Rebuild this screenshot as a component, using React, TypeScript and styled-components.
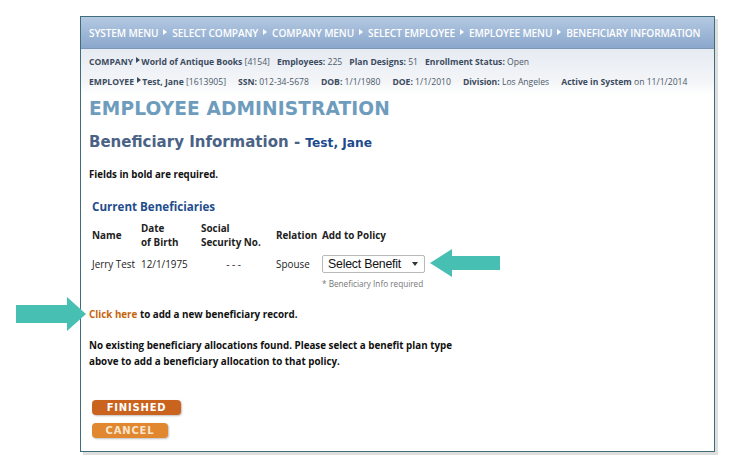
import styled, { createGlobalStyle } from "styled-components";

const GlobalStyle = createGlobalStyle`
  html, body {
    margin: 0;
    padding: 0;
    background: #ffffff;
  }
  body {
    font-family: "Open Sans", "Noto Sans", sans-serif;
    color: #111;
  }
`;

const Page = styled.div`
  position: relative;
  width: 735px;
  height: 466px;
  padding: 16px 0 0 80px;
  box-sizing: border-box;
`;

const Frame = styled.div`
  width: 635px;
  height: 436px;
  box-sizing: border-box;
  border: 1.5px solid #3f6d7a;
  box-shadow: 3px 3px 0 #dedede;
  background: #fff;
  display: flex;
  flex-direction: column;
`;

const NavBar = styled.div`
  height: 31px;
  display: flex;
  align-items: center;
  padding-left: 8px;
  gap: 4px;
  background: linear-gradient(#b4c9e2, #8aa7cc);
  border-bottom: 1px solid #7d97b8;
  color: #fff;
  font-size: 10.1px;
  font-weight: 600;
  letter-spacing: -0.12px;
  white-space: nowrap;
`;

const Caret = styled.span<{ $color?: string }>`
  display: inline-block;
  width: 0;
  height: 0;
  border-top: 3px solid transparent;
  border-bottom: 3px solid transparent;
  border-left: 4px solid ${(p) => p.$color || "#fff"};
  margin: 0 1px 2px 1px;
`;

const InfoArea = styled.div`
  height: 46px;
  box-sizing: border-box;
  padding: 6px 8px 0;
  background: linear-gradient(#e6ebf2, #f3f5f8 70%, #ffffff);
  display: flex;
  flex-direction: column;
  gap: 7px;
`;

const InfoRow = styled.div<{ $gap: number }>`
  display: flex;
  align-items: center;
  gap: ${(p) => p.$gap}px;
  font-size: 8.6px;
  color: #4d5a6a;
  white-space: nowrap;
  height: 13px;
`;

const InfoLabel = styled.b`
  font-weight: 700;
  color: #3c4b60;
`;

const Content = styled.div`
  padding: 0 8px;
  display: flex;
  flex-direction: column;
`;

const PageTitle = styled.h1`
  margin: 0;
  font-family: "DejaVu Sans", Verdana, sans-serif;
  font-size: 18.6px;
  font-weight: 700;
  color: #6e9cbd;
  line-height: 28px;
  letter-spacing: 0.1px;
`;

const SubTitle = styled.h2`
  margin: 8px 0 0;
  font-family: "DejaVu Sans", Verdana, sans-serif;
  font-size: 15px;
  font-weight: 700;
  color: #4a6285;
  line-height: 22px;
`;

const SubName = styled.span`
  font-size: 12.2px;
  color: #1d4a8e;
`;

const Note = styled.p`
  margin: 14px 0 0;
  font-size: 9.7px;
  font-weight: 700;
  line-height: 14px;
`;

const SectionTitle = styled.h3`
  margin: 17px 0 0 3px;
  font-size: 11.6px;
  font-weight: 700;
  color: #1f4d8c;
  line-height: 16px;
`;

const Grid = styled.div`
  margin: 4px 0 0 3px;
  display: grid;
  grid-template-columns: 49px 60px 75px 46px 120px;
  align-items: start;
  font-size: 9.9px;
  color: #222;
`;

const Head = styled.div`
  font-weight: 700;
  line-height: 14px;
  height: 32px;
  display: flex;
  align-items: center;
`;

const Cell = styled.div<{ $center?: boolean }>`
  height: 26px;
  display: flex;
  align-items: center;
  justify-content: ${(p) => (p.$center ? "center" : "flex-start")};
  padding-right: ${(p) => (p.$center ? "10px" : "0")};
`;

const PolicyCell = styled.div`
  display: flex;
  flex-direction: column;
  padding-top: 4px;
`;

const Select = styled.div`
  width: 103px;
  height: 18px;
  box-sizing: border-box;
  border: 1px solid #b9b9b9;
  border-radius: 2px;
  display: flex;
  align-items: center;
  justify-content: space-between;
  padding: 0 6px 0 5px;
  font-family: "Liberation Sans", Arial, sans-serif;
  font-size: 12.3px;
  color: #111;
  letter-spacing: -0.2px;
`;

const SelectCaret = styled.span`
  width: 0;
  height: 0;
  border-left: 3.5px solid transparent;
  border-right: 3.5px solid transparent;
  border-top: 4px solid #333;
`;

const Hint = styled.span`
  margin-top: 5px;
  font-size: 8.2px;
  color: #777;
`;

const Line = styled.p<{ $top: number }>`
  margin: ${(p) => p.$top}px 0 0;
  font-size: 9.8px;
  font-weight: 700;
  line-height: 16px;
  color: #111;
`;

const Link = styled.a`
  color: #c6650d;
  text-decoration: none;
`;

const Buttons = styled.div`
  margin: 30px 0 0 3px;
  display: flex;
  flex-direction: column;
  gap: 8px;
`;

const Button = styled.button<{ $width: number; $light?: boolean }>`
  width: ${(p) => p.$width}px;
  height: 15px;
  padding: 0;
  border: none;
  border-radius: 4px;
  background: ${(p) => (p.$light ? "#e0872f" : "#c9631d")};
  box-shadow: 1px 1px 2px rgba(0, 0, 0, 0.25);
  color: ${(p) => (p.$light ? "#fbe4cc" : "#fff")};
  font-family: "DejaVu Sans", Verdana, sans-serif;
  font-size: 10px;
  font-weight: 700;
  letter-spacing: 0.8px;
  line-height: 15px;
`;

const Arrow = styled.svg<{ $x: number; $y: number }>`
  position: absolute;
  left: ${(p) => p.$x}px;
  top: ${(p) => p.$y}px;
  overflow: visible;
`;

export default function App() {
  return (
    <>
      <GlobalStyle />
      <Page>
        <Frame>
          <NavBar>
            SYSTEM MENU <Caret /> SELECT COMPANY <Caret /> COMPANY MENU <Caret /> SELECT EMPLOYEE{" "}
            <Caret /> EMPLOYEE MENU <Caret /> BENEFICIARY INFORMATION
          </NavBar>
          <InfoArea>
            <InfoRow $gap={7}>
              <span>
                <InfoLabel>COMPANY</InfoLabel> <Caret $color="#3c4b60" />
                <InfoLabel>World of Antique Books</InfoLabel> [4154]
              </span>
              <span>
                <InfoLabel>Employees:</InfoLabel> 225
              </span>
              <span>
                <InfoLabel>Plan Designs:</InfoLabel> 51
              </span>
              <span>
                <InfoLabel>Enrollment Status:</InfoLabel> Open
              </span>
            </InfoRow>
            <InfoRow $gap={12}>
              <span>
                <InfoLabel>EMPLOYEE</InfoLabel> <Caret $color="#3c4b60" />
                <InfoLabel>Test, Jane</InfoLabel> [1613905]
              </span>
              <span>
                <InfoLabel>SSN:</InfoLabel> 012-34-5678
              </span>
              <span>
                <InfoLabel>DOB:</InfoLabel> 1/1/1980
              </span>
              <span>
                <InfoLabel>DOE:</InfoLabel> 1/1/2010
              </span>
              <span>
                <InfoLabel>Division:</InfoLabel> Los Angeles
              </span>
              <span>
                <InfoLabel>Active in System</InfoLabel> on 11/1/2014
              </span>
            </InfoRow>
          </InfoArea>
          <Content>
            <PageTitle>EMPLOYEE ADMINISTRATION</PageTitle>
            <SubTitle>
              Beneficiary Information - <SubName>Test, Jane</SubName>
            </SubTitle>
            <Note>Fields in bold are required.</Note>
            <SectionTitle>Current Beneficiaries</SectionTitle>
            <Grid>
              <Head>Name</Head>
              <Head>
                Date
                <br />
                of Birth
              </Head>
              <Head>
                Social
                <br />
                Security No.
              </Head>
              <Head>Relation</Head>
              <Head>Add to Policy</Head>
              <Cell>Jerry Test</Cell>
              <Cell>12/1/1975</Cell>
              <Cell $center>- - -</Cell>
              <Cell>Spouse</Cell>
              <PolicyCell>
                <Select>
                  Select Benefit <SelectCaret />
                </Select>
                <Hint>* Beneficiary Info required</Hint>
              </PolicyCell>
            </Grid>
            <Line $top={18}>
              <Link href="#">Click here</Link> to add a new beneficiary record.
            </Line>
            <Line $top={15}>
              No existing beneficiary allocations found. Please select a benefit plan type
              <br />
              above to add a beneficiary allocation to that policy.
            </Line>
            <Buttons>
              <Button $width={89}>FINISHED</Button>
              <Button $width={76} $light>
                CANCEL
              </Button>
            </Buttons>
          </Content>
        </Frame>

        {/* callout pointing at the benefit picker */}
        <Arrow $x={430} $y={249} width="70" height="28" viewBox="0 0 70 28">
          <polygon points="0,14 22,0 22,7 70,7 70,21 22,21 22,28" fill="#47c0b3" />
        </Arrow>
        {/* callout pointing at the add link */}
        <Arrow $x={16} $y={297} width="70" height="34" viewBox="0 0 70 34">
          <polygon points="70,17 51,0 51,8 0,8 0,26 51,26 51,34" fill="#47c0b3" />
        </Arrow>
      </Page>
    </>
  );
}
